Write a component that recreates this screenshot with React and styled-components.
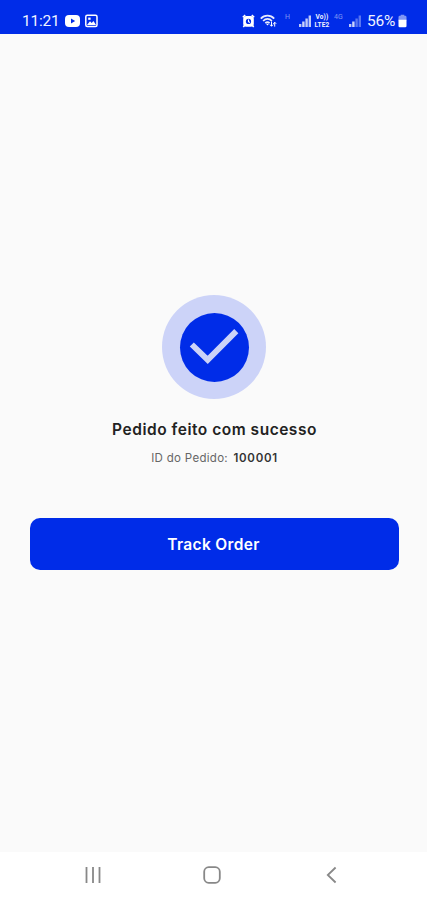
import React from "react";
import styled, { createGlobalStyle } from "styled-components";

const primaryColor = "#002ce8";
const haloColor = "#ccd3f8";

export default class App extends React.Component {
  render() {
    return (
      <Screen>
        <GlobalStyle />
        <StatusBar />
        <OrderSuccess title="Pedido feito com sucesso" orderId="100001" />
        <NavigationBar />
      </Screen>
    );
  }
}

const StatusBar = () => (
  <StatusWrapper>
    <StatusText $width={43}>11:21</StatusText>
    <StatusIcon $width={15} viewBox="0 0 15 14">
      <rect x="0" y="1" width="15" height="12" rx="4" />
      <path d="M6 4.4 10.2 7 6 9.6Z" fill={primaryColor} />
    </StatusIcon>
    <StatusIcon $width={13} $left={5} viewBox="0 0 13 14">
      <rect x="0.8" y="1.3" width="11.2" height="11.2" rx="1.5" fill="none" stroke="#fff" strokeWidth="1.5" />
      <path d="M2 11 5 7.2 6.7 9 8.5 7 11 11Z" />
      <rect x="3.2" y="3.6" width="2.4" height="2.2" />
    </StatusIcon>
    <Spacer />
    <StatusIcon $width={13} viewBox="0 0 13 14">
      <rect x="1.2" y="2" width="10.6" height="10.8" rx="3" />
      <path d="M0.8 3.3 3.2 1M12.2 3.3 9.8 1M2.5 11.5 1.3 13M10.5 11.5 11.7 13" stroke="#fff" strokeWidth="1.5" />
      <circle cx="6.5" cy="7.4" r="2.6" fill={primaryColor} />
      <path d="M6.5 5.4V7.6L8 8.5" fill="none" stroke="#fff" strokeWidth="1.1" />
    </StatusIcon>
    <StatusIcon $width={17} $left={5} viewBox="0 0 17 14">
      <path
        d="M0.8 4.6C4.4 0.6 10.6 0.6 14.2 4.6M3.1 7C5.8 4.1 9.2 4.1 11.9 7M5.3 9.2C6.8 7.8 8.3 7.8 9.6 9.2"
        fill="none"
        stroke="#fff"
        strokeWidth="1.7"
        opacity="0.9"
      />
      <path d="M6 9.8 7.5 11.6 9 9.8Z" />
      <path d="M11.5 7.5V12M10 10.6 11.5 12.3 13 10.6M14.7 12.6V8.4M13.3 9.8 14.7 8.2 16.2 9.8" fill="none" stroke="#fff" />
    </StatusIcon>
    <NetworkLabel $width={7} $left={8}>H</NetworkLabel>
    <Signal $left={7} />
    <Volte>
      <span>Vo))</span>
      <span>LTE2</span>
    </Volte>
    <NetworkLabel $width={11} $left={3}>4G</NetworkLabel>
    <Signal $left={4} weak />
    <StatusText $width={30} $left={6}>56%</StatusText>
    <StatusIcon $width={9} $left={1} viewBox="0 0 9 14">
      <path d="M2.7 0.7H6.3V1.8H7.2Q8.5 1.8 8.5 3.2V6.5H0.5V3.2Q0.5 1.8 1.8 1.8H2.7Z" opacity="0.5" />
      <path d="M0.5 5.7H8.5V12Q8.5 13.3 7.2 13.3H1.8Q0.5 13.3 0.5 12Z" />
    </StatusIcon>
  </StatusWrapper>
);

const Signal = ({ $left, weak }) => (
  <StatusIcon $width={12} $left={$left} viewBox="0 0 12 14">
    <rect x="0" y="10" width="2.4" height="3" opacity="0.75" />
    <rect x="3.2" y="7.5" width="2.4" height="5.5" opacity="0.8" />
    <rect x="6.4" y="4.5" width="2.4" height="8.5" opacity={weak ? 0.35 : 0.75} />
    <rect x="9.6" y="1.5" width="2.4" height="11.5" opacity={weak ? 0.35 : 0.75} />
  </StatusIcon>
);

const OrderSuccess = ({ title, orderId }) => (
  <Content>
    <Halo>
      <Disc>
        <svg width="50" height="38" viewBox="0 0 50 38">
          <path d="M2.8 16.5 18.7 31.9 47.3 3.1" fill="none" stroke={haloColor} strokeWidth="5.8" />
        </svg>
      </Disc>
    </Halo>
    <Title>{title}</Title>
    <OrderLine>
      ID do Pedido: <b>{orderId}</b>
    </OrderLine>
    <TrackButton>Track Order</TrackButton>
  </Content>
);

const NavigationBar = () => (
  <NavWrapper>
    <svg width="18" height="18" viewBox="0 0 18 18">
      <path d="M2.5 1V17M9 1V17M15.5 1V17" />
    </svg>
    <svg width="18" height="18" viewBox="0 0 18 18">
      <rect x="1.2" y="1.2" width="15.6" height="15.6" rx="4.5" />
    </svg>
    <svg width="18" height="18" viewBox="0 0 18 18">
      <path d="M13.6 1.5 5.8 9 13.6 16.5" />
    </svg>
  </NavWrapper>
);

const GlobalStyle = createGlobalStyle`
  body {
    margin: 0;
    background: #fafafa;
  }
`;

const Screen = styled.div`
  display: flex;
  flex-direction: column;
  height: 900px;
  background-color: #fafafa;
  font-family: Roboto, "Liberation Sans", sans-serif;
  overflow: hidden;
`;

const StatusWrapper = styled.div`
  box-sizing: border-box;
  display: flex;
  align-items: center;
  height: 34px;
  padding: 7px 20px 0 22px;
  background-color: ${primaryColor};
  color: #f0f3ff;
`;

const StatusText = styled.div`
  flex: none;
  width: ${(props) => props.$width}px;
  margin-left: ${(props) => props.$left || 0}px;
  font-size: 15.5px;
  line-height: 18px;
  letter-spacing: -0.2px;
  white-space: nowrap;
`;

const StatusIcon = styled.svg`
  flex: none;
  width: ${(props) => props.$width}px;
  height: 14px;
  margin-left: ${(props) => props.$left || 0}px;
  fill: #fff;
`;

const Spacer = styled.div`
  flex: 1;
`;

const NetworkLabel = styled.div`
  flex: none;
  width: ${(props) => props.$width}px;
  margin: -7px 0 0 ${(props) => props.$left}px;
  font-size: 7px;
  line-height: 8px;
  opacity: 0.5;
`;

const Volte = styled.div`
  flex: none;
  display: flex;
  flex-direction: column;
  width: 18px;
  margin-left: 2px;
  font-size: 6.5px;
  font-weight: 700;
  line-height: 8px;
  letter-spacing: 0.2px;
  text-align: center;
  white-space: nowrap;
`;

const Content = styled.div`
  flex: 1;
  display: flex;
  flex-direction: column;
  align-items: center;
  padding: 261px 28px 0 30px;
`;

const Halo = styled.div`
  display: flex;
  align-items: center;
  justify-content: center;
  width: 104px;
  height: 104px;
  margin-right: 1px;
  border-radius: 50%;
  background-color: ${haloColor};
`;

const Disc = styled.div`
  display: flex;
  align-items: center;
  justify-content: center;
  width: 69px;
  height: 69px;
  border-radius: 50%;
  background-color: ${primaryColor};
`;

const Title = styled.div`
  margin-top: 21px;
  color: #222;
  font-family: Inter, sans-serif;
  font-size: 15.5px;
  font-weight: 600;
  line-height: 20px;
  letter-spacing: 0.52px;
  white-space: nowrap;
`;

const OrderLine = styled.div`
  margin-top: 10px;
  color: #666;
  font-family: Inter, sans-serif;
  font-size: 11.5px;
  line-height: 16px;
  letter-spacing: 0.3px;
  white-space: nowrap;

  b {
    margin-left: 2px;
    color: #333;
    font-weight: 600;
    letter-spacing: 0.7px;
  }
`;

const TrackButton = styled.button`
  align-self: stretch;
  height: 52px;
  margin-top: 52px;
  padding: 0 2px 0 0;
  border: 0;
  border-radius: 10px;
  background-color: ${primaryColor};
  color: #fff;
  font-family: Inter, sans-serif;
  font-size: 15.5px;
  font-weight: 600;
  letter-spacing: 0.35px;
`;

const NavWrapper = styled.div`
  box-sizing: border-box;
  display: flex;
  justify-content: space-between;
  height: 48px;
  padding: 14px 87px 0 84px;
  background-color: #fff;

  svg {
    fill: none;
    stroke: #888;
    stroke-width: 1.8;
  }
`;
